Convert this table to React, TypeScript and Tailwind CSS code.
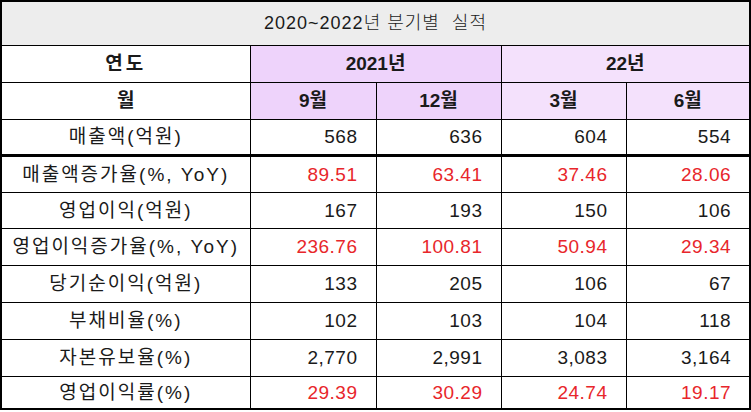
import React from 'react';

interface Row {
  label: string;
  values: string[];
  red?: boolean;
}

const rows: Row[] = [
  { label: '매출액(억원)', values: ['568', '636', '604', '554'] },
  { label: '매출액증가율(%, YoY)', values: ['89.51', '63.41', '37.46', '28.06'], red: true },
  { label: '영업이익(억원)', values: ['167', '193', '150', '106'] },
  { label: '영업이익증가율(%, YoY)', values: ['236.76', '100.81', '50.94', '29.34'], red: true },
  { label: '당기순이익(억원)', values: ['133', '205', '106', '67'] },
  { label: '부채비율(%)', values: ['102', '103', '104', '118'] },
  { label: '자본유보율(%)', values: ['2,770', '2,991', '3,083', '3,164'] },
  { label: '영업이익률(%)', values: ['29.39', '30.29', '24.74', '19.17'], red: true },
];

const font = { fontFamily: '"Liberation Sans", "Noto Sans CJK KR", sans-serif' };

export default function App() {
  return (
    <div className="bg-white w-[751px] h-[412px] overflow-hidden" style={font}>
      <table className="border-collapse border-2 border-black w-[749px] table-fixed text-[19px] leading-none text-[#1a1a1a]">
        <colgroup>
          <col className="w-[249px]" />
          <col className="w-[126px]" />
          <col className="w-[125px]" />
          <col className="w-[125px]" />
          <col className="w-[124px]" />
        </colgroup>
        <tbody>
          <tr className="h-[44px]">
            <td colSpan={5} className="bg-[#ededed] border border-black text-center text-[18px] tracking-[1px] font-light">
              2020~2022년 분기별&nbsp; 실적
            </td>
          </tr>
          <tr className="h-[37px] font-bold">
            <td className="border border-black text-center tracking-[3px]">연도</td>
            <td colSpan={2} className="border border-black text-center bg-[#eed3fb]">2021년</td>
            <td colSpan={2} className="border border-black text-center bg-[#f4e1fc]">22년</td>
          </tr>
          <tr className="h-[37px] font-bold">
            <td className="border border-black text-center">월</td>
            <td className="border border-black text-center bg-[#eed3fb]">9월</td>
            <td className="border border-black text-center bg-[#eed3fb]">12월</td>
            <td className="border border-black text-center bg-[#f4e1fc]">3월</td>
            <td className="border border-black text-center bg-[#f4e1fc]">6월</td>
          </tr>
          {rows.map((row, i) => (
            <tr key={row.label} className={i === 7 ? 'h-[33px]' : i === 0 || i === 2 ? 'h-[36px]' : 'h-[37px]'}>
              <td className={`border border-black text-center tracking-[2px] ${i === 0 ? 'border-b-[3px]' : ''}`}>
                {row.label}
              </td>
              {row.values.map((v, j) => (
                <td
                  key={j}
                  className={`border border-black text-right pr-[18px] tracking-[0.5px] ${i === 0 ? 'border-b-[3px]' : ''} ${row.red ? 'text-[#e8262b]' : ''}`}
                >
                  {v}
                </td>
              ))}
            </tr>
          ))}
        </tbody>
      </table>
    </div>
  );
}
